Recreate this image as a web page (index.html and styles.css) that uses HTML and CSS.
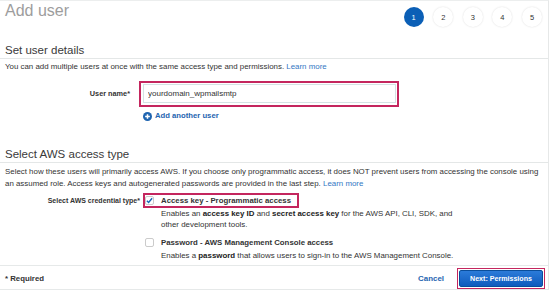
FILE: index.html
```html
<!DOCTYPE html>
<html lang="en">
<head>
    <meta charset="UTF-8">
    <meta name="viewport" content="width=device-width, initial-scale=1.0">
    <title>Add user</title>
    <link rel="stylesheet" href="styles.css">
</head>
<body>

    <div class="panel">
        <div class="page-header">
            <h1>Add user</h1>
            <ol class="steps">
                <li class="step active">1</li>
                <li class="step">2</li>
                <li class="step">3</li>
                <li class="step">4</li>
                <li class="step">5</li>
            </ol>
        </div>

        <div class="section">
            <h2>Set user details</h2>
            <p class="section-text">You can add multiple users at once with the same access type and permissions. <a href="#">Learn more</a></p>
            <div class="form-row">
                <label class="form-label" for="username">User name*</label>
                <div class="form-control">
                    <div class="highlight input-wrap">
                        <input id="username" type="text" value="yourdomain_wpmailsmtp">
                    </div>
                    <a class="add-user" href="#">
                        <svg width="9" height="9" viewBox="0 0 10 10"><circle cx="5" cy="5" r="5" fill="#1e64b0"/><path d="M5 2.4v5.2M2.4 5h5.2" stroke="#fff" stroke-width="1.7"/></svg>
                        Add another user
                    </a>
                </div>
            </div>
        </div>

        <div class="section section-access">
            <h2>Select AWS access type</h2>
            <p class="section-text">Select how these users will primarily access AWS. If you choose only programmatic access, it does NOT prevent users from accessing the console using an assumed role. Access keys and autogenerated passwords are provided in the last step. <a href="#">Learn more</a></p>
            <div class="form-row form-row-wide">
                <span class="form-label">Select AWS credential type*</span>
                <div class="options">
                    <div class="option">
                        <div class="option-head highlight">
                            <span class="checkbox"><svg width="7" height="7" viewBox="0 0 8 8"><path d="M1 4.3l2 2L7 1.4" fill="none" stroke="#1566b7" stroke-width="1.6"/></svg></span>
                            <strong>Access key - Programmatic access</strong>
                        </div>
                        <p class="option-desc">Enables an <b>access key ID</b> and <b>secret access key</b> for the AWS API, CLI, SDK, and other development tools.</p>
                    </div>
                    <div class="option">
                        <div class="option-head">
                            <span class="checkbox"></span>
                            <strong>Password - AWS Management Console access</strong>
                        </div>
                        <p class="option-desc">Enables a <b>password</b> that allows users to sign-in to the AWS Management Console.</p>
                    </div>
                </div>
            </div>
        </div>

        <div class="footer">
            <span class="required">* Required</span>
            <div class="footer-actions">
                <a class="cancel" href="#">Cancel</a>
                <div class="highlight-thin">
                    <button class="primary-button">Next: Permissions</button>
                </div>
            </div>
        </div>
    </div>

</body>
</html>
```

FILE: styles.css
```css
* {
    box-sizing: border-box;
}

body {
    margin: 0;
    font-family: "Liberation Sans", Arial, sans-serif;
    font-size: 7.9px;
    color: #333;
    background: #fff;
}

a {
    color: #3377c4;
    text-decoration: none;
}

.panel {
    width: 549px;
    height: 290px;
    overflow: hidden;
    border-top: 1px solid #eceeee;
    border-right: 1px solid #e6e8e8;
}

/* Header with title and steps */
.page-header {
    height: 41px;
    display: flex;
    justify-content: space-between;
    align-items: flex-start;
    padding: 0 6px 0 5px;
}

h1 {
    margin: 0;
    font-size: 16px;
    line-height: 20px;
    font-weight: normal;
    color: #9d9d9d;
}

.steps {
    list-style: none;
    margin: 6px 0 0;
    padding: 0;
    display: flex;
    gap: 9.6px;
}

.step {
    width: 20px;
    height: 20px;
    border-radius: 50%;
    display: flex;
    align-items: center;
    justify-content: center;
    font-size: 7.5px;
    color: #333;
    background: #fff;
    box-shadow: 0 0 2px rgba(0, 0, 0, 0.14);
}

.step.active {
    background: #0b5fb6;
    color: #fff;
    box-shadow: none;
}

/* Sections */
h2 {
    margin: 0;
    padding: 0 5px;
    font-size: 11.5px;
    line-height: 16px;
    font-weight: normal;
    color: #3a3a3a;
    border-bottom: 1px solid #e4e7e7;
}

.section-text {
    margin: 2px 0 0;
    padding: 0 3px 0 5px;
    line-height: 12px;
}

.section-access {
    margin-top: 25px;
}

.section-access .section-text {
    margin-top: 3px;
}

.form-row {
    display: grid;
    grid-template-columns: 130px 1fr;
    column-gap: 9px;
    align-items: start;
    margin-top: 8px;
}

.form-row-wide {
    grid-template-columns: 140px 1fr;
    column-gap: 3px;
    margin-top: 3px;
}

.form-label {
    text-align: right;
    font-weight: bold;
    font-size: 7.3px;
    line-height: 26px;
    color: #333;
}

.form-row-wide .form-label {
    font-size: 7px;
    line-height: 15px;
}

.highlight {
    border: 2px solid #c4265e;
}

.input-wrap {
    width: 260px;
    padding: 1px 1px 2px 2px;
}

.input-wrap input {
    display: block;
    width: 100%;
    height: 19px;
    margin: 0;
    padding: 0 4px;
    border: 1px solid #d4e2e4;
    font: inherit;
    font-size: 8px;
    color: #333;
    outline: none;
}

.add-user {
    display: flex;
    align-items: center;
    gap: 3px;
    margin: 4px 0 0 4px;
    line-height: 10px;
    font-weight: bold;
    font-size: 7.7px;
    color: #1e64b0;
}

/* Credential options */
.option + .option {
    margin-top: 5px;
}

.option-head {
    display: inline-flex;
    align-items: center;
    gap: 7px;
    height: 15px;
    padding-right: 6px;
    border: 2px solid transparent;
    font-size: 7.8px;
    line-height: 11px;
}

.option-head.highlight {
    border-color: #c4265e;
}

.checkbox {
    width: 9px;
    height: 9px;
    border: 1px solid #cbcbcb;
    border-radius: 2px;
    background: #fff;
    display: flex;
    align-items: center;
    justify-content: center;
}

.option-desc {
    margin: 0 0 0 18px;
    max-width: 300px;
    line-height: 11px;
}

.option-desc b {
    color: #222;
}

/* Footer */
.footer {
    margin-top: 4px;
    height: 25px;
    padding: 2px 3px 0 5px;
    border-top: 1px solid #e6e9e9;
    border-bottom: 1px solid #e6e9e9;
    display: flex;
    justify-content: space-between;
    align-items: center;
}

.required {
    font-weight: bold;
    font-size: 7.8px;
}

.footer-actions {
    display: flex;
    align-items: center;
}

.cancel {
    margin-right: 13px;
    font-weight: bold;
    font-size: 7.9px;
    color: #1e64b0;
}

.highlight-thin {
    border: 1px solid #c4265e;
    padding: 1px;
}

.primary-button {
    display: block;
    width: 84px;
    height: 17px;
    padding: 0;
    border: 1px solid #0a4e9b;
    border-radius: 2px;
    background: linear-gradient(#2b7bd9, #0f5bbd);
    color: #fff;
    font-family: inherit;
    font-weight: bold;
    font-size: 7.1px;
    cursor: pointer;
}
```
